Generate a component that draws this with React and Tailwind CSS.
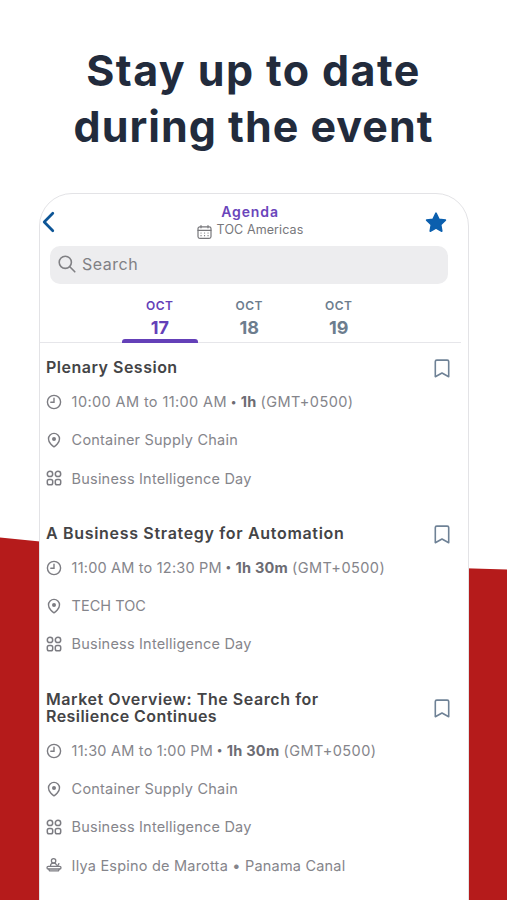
import React from 'react'

const DAYS = [
  { month: 'OCT', day: '17', active: true },
  { month: 'OCT', day: '18' },
  { month: 'OCT', day: '19' },
]

const SESSIONS = [
  {
    title: [{ text: 'Plenary Session', tracking: 'tracking-[0.5px]' }],
    time: '10:00 AM to 11:00 AM',
    timeTracking: 'tracking-[0.39px]',
    duration: '1h',
    place: 'Container Supply Chain',
    track: 'Business Intelligence Day',
  },
  {
    title: [{ text: 'A Business Strategy for Automation', tracking: 'tracking-[0.68px]' }],
    time: '11:00 AM to 12:30 PM',
    timeTracking: 'tracking-[0.19px]',
    duration: '1h 30m',
    place: 'TECH TOC',
    placeTracking: 'tracking-[0.03px]',
    track: 'Business Intelligence Day',
  },
  {
    title: [
      { text: 'Market Overview: The Search for', tracking: 'tracking-[0.56px]' },
      { text: 'Resilience Continues', tracking: 'tracking-[0.45px]' },
    ],
    time: '11:30 AM to 1:00 PM',
    timeTracking: 'tracking-[0.21px]',
    duration: '1h 30m',
    place: 'Container Supply Chain',
    track: 'Business Intelligence Day',
    speaker: 'Ilya Espino de Marotta • Panama Canal',
  },
]

function ClockIcon() {
  return (
    <svg width="16" height="16" viewBox="0 0 16 16" fill="none" stroke="currentColor" strokeWidth="1.4" strokeLinecap="round">
      <circle cx="8" cy="8" r="6.6" />
      <path d="M8 4.2V8.3H4.8" />
    </svg>
  )
}

function PinIcon() {
  return (
    <svg width="16" height="16" viewBox="0 0 16 16" fill="none" stroke="currentColor" strokeWidth="1.4" strokeLinejoin="round">
      <path d="M8 14.8C6.6 14 2.5 10.6 2.5 6.9a5.5 5.5 0 0 1 11 0c0 3.7-4.1 7.1-5.5 7.9z" />
      <circle cx="8" cy="6.9" r="2" fill="currentColor" stroke="none" />
    </svg>
  )
}

function TrackIcon() {
  return (
    <svg width="16" height="16" viewBox="0 0 16 16" fill="none" stroke="currentColor" strokeWidth="1.5">
      <circle cx="4" cy="3.9" r="2.7" />
      <circle cx="12" cy="3.9" r="2.7" />
      <rect x="1.3" y="9.4" width="5.4" height="5.4" rx="1.8" />
      <rect x="9.3" y="9.4" width="5.4" height="5.4" rx="1.8" />
    </svg>
  )
}

function SpeakerIcon() {
  return (
    <svg width="16" height="16" viewBox="0 0 16 16" fill="none" stroke="currentColor" strokeWidth="1.3" strokeLinecap="round" strokeLinejoin="round">
      <circle cx="7.6" cy="3.8" r="2.2" />
      <path d="M4.6 9.4V8.6c0-1.5 1-2.4 3-2.4 1.6 0 2.6.7 2.9 1.8" />
      <path d="M12.9 6.6l-1.5 2.8" />
      <rect x="1" y="9.4" width="14" height="2.6" rx="1.3" />
      <path d="M2.8 12.1l.6 1.7h9.2l.6-1.7" />
    </svg>
  )
}

function BookmarkIcon() {
  return (
    <svg width="16" height="19" viewBox="0 0 16 19" fill="none" stroke="currentColor" strokeWidth="1.6" strokeLinejoin="round">
      <path d="M1.3 17.7V2.6c0-.9.6-1.5 1.5-1.5h10.4c.9 0 1.5.6 1.5 1.5v15.1L8 14z" />
    </svg>
  )
}

function Row({ icon, children }) {
  return (
    <div className="flex h-[38.3px] items-center text-[14.5px] text-[#85858b]">
      <span className="mr-[9.6px] w-4 shrink-0 text-[#7c7c82]">{icon}</span>
      {children}
    </div>
  )
}

function Session({ session }) {
  return (
    <div className="pb-[27.3px] pl-[5px]">
      <div className="flex items-center justify-between pr-[18px]">
        <h2 className="text-[16px] font-semibold text-[#444446]">
          {session.title.map((line) => (
            <span key={line.text} className={`block h-[17px] leading-[17px] ${line.tracking}`}>{line.text}</span>
          ))}
        </h2>
        <span className="-my-1 translate-y-px text-[#6f8296]"><BookmarkIcon /></span>
      </div>
      <div className="mt-[6.7px]">
        <Row icon={<ClockIcon />}>
          <span className={session.timeTracking}>{session.time}</span>
          <span className="ml-[3.5px] text-[11px] text-[#6c6c73]">•</span>
          <b className="ml-[4px] mr-1 font-bold tracking-[0.25px] text-[#6c6c73]">{session.duration}</b>
          <span className="tracking-[0.45px]">(GMT+0500)</span>
        </Row>
        <Row icon={<PinIcon />}>
          <span className={session.placeTracking || 'tracking-[0.21px]'}>{session.place}</span>
        </Row>
        <Row icon={<TrackIcon />}>
          <span className="tracking-[0.2px]">{session.track}</span>
        </Row>
        {session.speaker && (
          <Row icon={<SpeakerIcon />}>
            <span className="tracking-[0.21px]">{session.speaker}</span>
          </Row>
        )}
      </div>
    </div>
  )
}

export default function App() {
  return (
    <div className="relative flex h-[900px] w-[507px] flex-col overflow-hidden bg-white font-['Inter',sans-serif]">
      {/* Red backdrop */}
      <svg className="absolute inset-0" width="507" height="900" viewBox="0 0 507 900">
        <path d="M0 537.5L60 543.5L440 567.5L507 569.5V900H0z" fill="#b51b1b" />
      </svg>

      <h1 className="pt-[42px] text-center text-[43px] font-bold leading-[56px] text-[#222b3c]">
        <span className="block tracking-[1.4px]">Stay up to date</span>
        <span className="block tracking-[1px]">during the event</span>
      </h1>

      {/* Phone screen */}
      <div className="relative ml-[39px] mt-[39px] h-[740px] w-[430px] shrink-0 rounded-t-[33px] border border-[#e3e3e6] bg-white">
        <header className="flex h-[52px] items-center justify-between pl-[2px] pr-[21px]">
          <svg className="mt-[3px]" width="13" height="22" viewBox="0 0 13 22" fill="none" stroke="#0d5596" strokeWidth="2.7" strokeLinecap="round" strokeLinejoin="round">
            <path d="M10.8 2.2L2.2 11l8.6 8.8" />
          </svg>
          <div className="flex translate-x-[10px] flex-col items-center pt-px">
            <span className="text-[14px] font-semibold leading-[18px] tracking-[0.9px] text-[#6a45bb]">Agenda</span>
            <div className="flex items-center gap-[5px] text-[#77777b]">
              <svg width="15" height="14" viewBox="0 0 15 14" className="translate-y-[2px]" fill="none" stroke="currentColor" strokeWidth="1.2" strokeLinecap="round">
                <rect x="1" y="1.8" width="13" height="11.6" rx="1.8" />
                <path d="M1 5.3h13M4 .6v2.2M11 .6v2.2" />
                <path d="M4 8h.1M7.5 8h.1M11 8h.1M4 10.7h.1M7.5 10.7h.1M11 10.7h.1" />
              </svg>
              <span className="text-[12.5px] leading-[18px] tracking-[0.1px]">TOC Americas</span>
            </div>
          </div>
          <svg className="mt-[4px]" width="22" height="21" viewBox="0 0 22 21" fill="#0b5fae" stroke="#0b5fae" strokeWidth="1.6" strokeLinejoin="round">
            <path d="M11 1.2l2.9 6 6.5.9-4.7 4.6 1.1 6.5L11 16.1l-5.8 3.1 1.1-6.5L1.6 8.1l6.5-.9z" />
          </svg>
        </header>

        <div className="ml-[10px] flex h-[38px] w-[398px] items-center rounded-[10px] bg-[#ededef] pb-[2px] pl-2 text-[#808084]">
          <svg width="18" height="18" viewBox="0 0 18 18" fill="none" stroke="currentColor" strokeWidth="1.6" strokeLinecap="round">
            <circle cx="7.3" cy="7.3" r="6.1" />
            <path d="M11.8 11.8l5 5" />
          </svg>
          <span className="ml-[6px] text-[16px] tracking-[0.5px]">Search</span>
        </div>

        <div className="mr-[7px] flex h-[59px] border-b border-[#e6e6ea] pl-[75px]">
          {DAYS.map((d) => (
            <div key={d.day} className={`flex w-[89.5px] flex-col items-center pt-[14px] font-semibold ${d.active ? 'text-[#6440b8]' : 'text-[#6d7d8e]'}`}>
              <span className="text-[12px] leading-4 tracking-[0.45px]">{d.month}</span>
              <span className="mt-[3px] text-[18px] font-bold leading-[22px]">{d.day}</span>
              {d.active && <div className="-mb-px mt-auto h-[4px] w-[76px] shrink-0 rounded-t-[3px] bg-[#6440b8]" />}
            </div>
          ))}
        </div>

        <div className="pl-[1px] pt-[16px]">
          {SESSIONS.map((s) => <Session key={s.title[0].text} session={s} />)}
        </div>
      </div>
    </div>
  )
}
